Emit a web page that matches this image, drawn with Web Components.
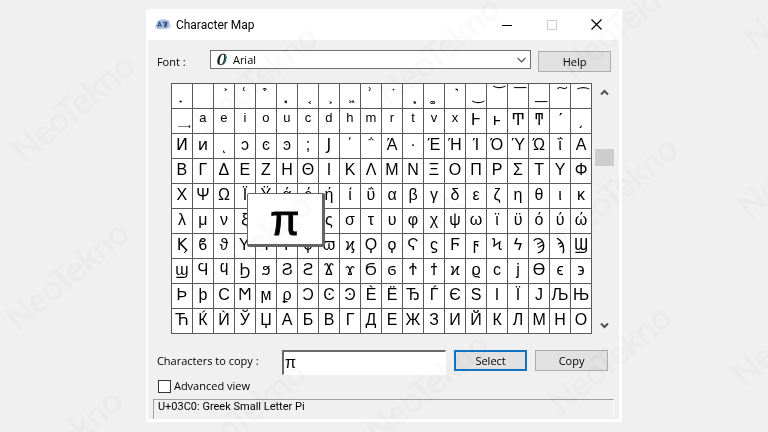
<!DOCTYPE html>
<html lang="en">
<head>
<meta charset="utf-8">
<title>Character Map</title>
<style>
html{background:#f0f0f0}
body{margin:0;min-height:100vh;overflow:hidden;position:relative;font:11px/14px "Open Sans","Noto Sans",sans-serif;color:#000}
</style>
</head>
<body>
<map-window></map-window>
<page-watermark></page-watermark>
<script>
const make=(name,html,setup)=>customElements.define(name,class extends HTMLElement{
  connectedCallback(){
    if(this.shadowRoot)return;
    const t=document.createElement('template');
    t.innerHTML=html;
    this.attachShadow({mode:'open'}).appendChild(t.content.cloneNode(true));
    if(setup)setup(this,this.shadowRoot);
  }
});

make('page-watermark',`<style>
:host{position:absolute;inset:0;pointer-events:none;overflow:hidden;mix-blend-mode:multiply}
svg{width:100%;height:100%;display:block}
text{font:34px Lato,sans-serif;fill:#fafafa;stroke:#fafafa;stroke-width:1px}
</style><svg aria-hidden="true"></svg>`,(el,root)=>{
  let s='';
  for(let c=0;c<5;c++)for(let r=-1;r<4;r++){
    const x=24+c*183-r*6,y=164-c*28+r*168;
    s+=`<text transform="translate(${x} ${y}) rotate(-40)">NeoTekno</text>`;
  }
  root.querySelector('svg').innerHTML=s;
});

make('push-button',`<style>
:host{display:block;width:73px;flex:none}
button{display:block;width:100%;height:21px;padding:0;border:1px solid #adadad;background:#e1e1e1;font:inherit;color:inherit}
:host([primary]) button{border:2px solid #0f74c4}
</style><button type="button"><slot></slot></button>`);

make('title-bar',`<style>
:host{display:flex;align-items:center;height:31px;background:#fff;padding-left:7px;font:12px/16px Roboto,"Open Sans",sans-serif}
.logo{width:16px;height:13px;margin-right:5px}
h1{flex:1;margin:0;font:inherit}
button{width:45px;height:31px;padding:0;border:0;background:none}
button svg{display:block;margin:auto}
</style>
<svg class="logo" viewBox="0 0 15 12"><path d="M0 8 3 2l3-1 3 0 4 1 2 6-3 2H3z" fill="#b9cce6"/><path d="M1 8l1.500-5 4-.5L6 10H2z" fill="#9fb6d8"/><path d="M2.500 8 4.300 4 6 8M3 7h2.500" stroke="#3a4f80" fill="none"/><path d="M7 2.500h4l2 1-1 5-3 1.500L7 8z" fill="#93a8cd"/><path d="M8 4.500q3-1.500 2 1L9 8M11 4l-1 4" stroke="#2c3e70" fill="none"/></svg>
<h1><slot></slot></h1>
<button type="button" aria-label="Minimize"><svg width="10" height="10"><path d="M0 5.500h10" stroke="#000"/></svg></button>
<button type="button" aria-label="Maximize" disabled><svg width="10" height="10"><path d="M.5.5h9v9h-9z" fill="none" stroke="#ccc"/></svg></button>
<button type="button" aria-label="Close"><svg width="11" height="11"><path d="M.5.5l10 10M10.500.5l-10 10" stroke="#000" stroke-width="1.200"/></svg></button>`);

make('font-picker',`<style>
:host{display:flex;align-items:center;flex:1}
label{width:53px;padding-top:4px}
.box{flex:1;display:flex;align-items:center;height:17px;border:1px solid #707070;background:#fff;padding:0 4px 0 5px}
.ot{width:12px;height:13px}
select{flex:1;appearance:none;border:0;background:none;font:inherit;color:inherit;padding:0 0 0 5px;height:17px;outline:0}
</style>
<label for="f">Font :</label>
<div class="box">
<svg class="ot" viewBox="0 0 12 13"><path fill-rule="evenodd" d="M7 .7c3 0 4 2 3.400 5.300C9.800 9.800 7.600 12.200 4.800 12.200 2 12.200.8 10 1.400 7 2 3.300 4.200.7 7 .7zM6.900 1.500C5.200 1.500 4 5 3.700 8c-.2 2 .2 3.400 1.200 3.400 1.600 0 2.800-3.400 3.200-6.300.2-2.100 0-3.600-1.200-3.600z" fill="#14292a"/><path d="M9 2q1.500 2 .3 5T6 11.500" stroke="#27827e" fill="none"/></svg>
<select id="f"><option>Arial</option></select>
<svg width="9" height="6"><path d="M.5.8l4 4 4-4" fill="none" stroke="#505050" stroke-width="1.200"/></svg>
</div>`);

make('scroll-rail',`<style>
:host{display:flex;flex-direction:column;align-items:center;width:19px;flex:none;background:#f0f0f0}
button{height:18px;width:19px;padding:0;border:0;background:none}
svg{display:block;margin:auto}
.track{flex:1;width:100%;display:grid;grid-template-rows:48fr 17fr 150fr}
.thumb{grid-row:2;background:#cdcdcd}
</style>
<button type="button" aria-label="Scroll up"><svg width="9" height="7"><path d="M1 5.500 4.500 2 8 5.500" fill="none" stroke="#505050" stroke-width="2"/></svg></button>
<div class="track"><div class="thumb"></div></div>
<button type="button" aria-label="Scroll down"><svg width="9" height="7"><path d="M1 1.500 4.500 5 8 1.500" fill="none" stroke="#505050" stroke-width="2"/></svg></button>`);

const range=(a,b)=>Array.from({length:b-a+1},(_,i)=>a+i);
const unassigned=[0x378,0x379,0x380,0x381,0x382,0x383,0x38B,0x38D,0x3A2];
const codes=range(0x34E,0x41E).filter(c=>!unassigned.includes(c));
const smallLetters='aeioucdhmrtvx';

make('glyph-grid',`<style>
:host{display:block;flex:1;position:relative}
.grid{display:grid;grid-template-columns:repeat(20,minmax(0,1fr));grid-auto-rows:24px;gap:1px;padding:1px;background:#5a5a5a}
button{border:0;margin:0;padding:0;background:#fff;color:#000;font:16px/22px "Liberation Sans","DejaVu Sans","Noto Sans",sans-serif;overflow:hidden;display:block;text-align:center}
span{display:block;height:24px}
.small{font-size:13px;line-height:18px}
.mark{font-family:"DejaVu Sans","Noto Sans",sans-serif;font-size:14px}
.zoom{position:absolute;left:18%;top:110px;width:74px;height:46px;padding-top:4px;border:1px solid #646464;border-right-width:3px;border-bottom-width:3px;border-radius:2px;background:#fff;text-align:center;font:42px/46px "Liberation Sans",sans-serif;-webkit-text-stroke:1px #000}
</style><div class="grid"></div><div class="zoom">π</div>`,(el,root)=>{
  const g=root.querySelector('.grid');
  for(const c of codes){
    const b=document.createElement('button'),s=document.createElement('span');
    b.type='button';
    b.setAttribute('aria-label','U+'+c.toString(16).toUpperCase().padStart(4,'0'));
    if(c>=0x363&&c<=0x36F){s.className='small';s.textContent=smallLetters[c-0x363]}
    else if(c<0x363){s.className='mark';s.textContent='\u00a0'+String.fromCodePoint(c)}
    else s.textContent=String.fromCodePoint(c);
    b.append(s);g.append(b);
  }
});

make('copy-field',`<style>
:host{display:flex;align-items:flex-start;flex:1;min-width:0}
label{width:125px;padding-top:4px}
input{flex:1;min-width:0;height:25px;box-sizing:border-box;border:1px solid #fff;border-top:2px solid #696969;border-left:2px solid #696969;background:#fff;padding:0 1px;font:16px/20px "Liberation Sans",sans-serif;color:#000;outline:0}
</style><label for="c"><slot></slot></label><input id="c" type="text" value="π">`);

make('check-option',`<style>
:host{display:flex}
label{display:flex;align-items:center;gap:3px}
input{appearance:none;margin:0;width:13px;height:13px;box-sizing:border-box;border:1px solid #333;background:#fff}
</style><label><input type="checkbox"><slot></slot></label>`);

make('status-line',`<style>
:host{display:block;height:20px;box-sizing:border-box;border:1px solid #a0a0a0;border-right-color:#fff;border-bottom:0;padding-left:4px;font-family:Roboto,"Open Sans",sans-serif}
</style><slot></slot>`);

make('map-window',`<style>
:host{display:block;padding-top:9px}
main{width:62%;margin:0 auto;background:#f0f0f0;border-radius:2px;box-sizing:border-box;border:solid #fff;border-width:0 3px 3px 2px}
.row{display:flex;align-items:flex-start}
.font{padding:10px 8px 0 9px;gap:7px}
.font push-button{margin-top:1px}
.chars{padding:11px 5px 0 23px;gap:3px}
.copy{padding:16px 11px 0 9px;gap:8px}
check-option{padding:4px 0 0 10px}
status-line{margin:6px 5px 0 5px}
.chars scroll-rail{align-self:stretch}
</style>
<main>
<title-bar>Character Map</title-bar>
<div class="row font"><font-picker></font-picker><push-button>Help</push-button></div>
<div class="row chars"><glyph-grid></glyph-grid><scroll-rail></scroll-rail></div>
<div class="row copy"><copy-field>Characters to copy :</copy-field><push-button primary>Select</push-button><push-button>Copy</push-button></div>
<check-option>Advanced view</check-option>
<status-line>U+03C0: Greek Small Letter Pi</status-line>
</main>`);
</script>
</body>
</html>
